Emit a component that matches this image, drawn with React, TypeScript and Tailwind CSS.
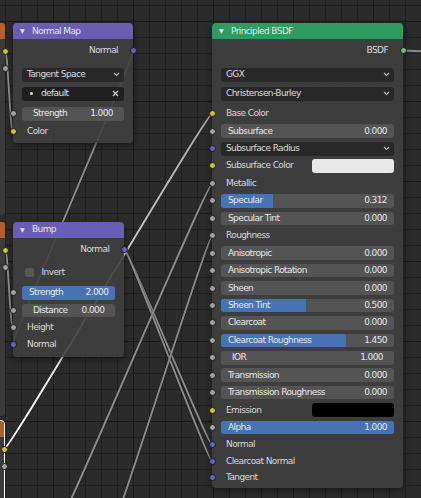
import React from 'react';

// socket colours
const YEL = 'bg-[#c7c729]';
const GRY = 'bg-[#a1a1a1]';
const BLU = 'bg-[#6363c7]';
const GRN = 'bg-[#63c763]';

// row heights: the small nodes run a touch tighter than the BSDF node
const RS = 'h-[17.35px]';
const RP = 'h-[17.45px]';
const RV = 'h-[16.6px]';

function Socket({ c, right }: { c: string; right?: boolean }) {
  return (
    <span
      className={`absolute top-1/2 -mt-[3.5px] h-[7px] w-[7px] rounded-full border border-[#1b1b1b] ${c} ${
        right ? 'right-[-3.5px]' : 'left-[-3.5px]'
      }`}
    />
  );
}

function Chevron() {
  return (
    <svg width="7" height="5" viewBox="0 0 7 5" className="shrink-0">
      <polyline points="1,1 3.5,3.5 6,1" fill="none" stroke="#b8b8b8" strokeWidth="1.1" />
    </svg>
  );
}

function Node({
  pos,
  title,
  head,
  children,
}: {
  pos: string;
  title: string;
  head: string;
  children: React.ReactNode;
}) {
  return (
    <div className={`absolute flex flex-col rounded-[4px] shadow-[0_2px_6px_rgba(0,0,0,0.45)] ${pos}`}>
      <div className={`flex h-[16px] shrink-0 items-center rounded-t-[4px] pl-[7px] text-[#e6e6e6] ${head}`}>
        <span className="w-[12px] text-[6px] leading-none">▼</span>
        <span className="leading-none">{title}</span>
      </div>
      <div className="flex flex-col rounded-b-[4px] bg-[#3f3f3f]/90">{children}</div>
    </div>
  );
}

function Output({ text, s }: { text: string; s: string }) {
  return (
    <div className={`relative flex ${RS} shrink-0 items-center justify-end pr-[15px]`}>
      <span className="leading-none text-[#dcdcdc]">{text}</span>
      <Socket c={s} right />
    </div>
  );
}

function Label({ text, s, h = RS }: { text: string; s: string; h?: string }) {
  return (
    <div className={`relative flex ${h} shrink-0 items-center pl-[14px]`}>
      <Socket c={s} />
      <span className="leading-none text-[#d9d9d9]">{text}</span>
    </div>
  );
}

function Slider({
  label,
  value,
  fill = 0,
  s,
  indent,
  h = RS,
}: {
  label: string;
  value: string;
  fill?: number;
  s?: string;
  indent?: boolean;
  h?: string;
}) {
  return (
    <div className={`relative flex ${h} shrink-0 items-center px-[9px]`}>
      {s && <Socket c={s} />}
      <div className="relative h-[13.5px] w-full overflow-hidden rounded-[3px] bg-[#545454]">
        {fill > 0 && (
          <div className="absolute inset-y-0 left-0 bg-[#4772b3]" style={{ width: `${fill}%` }} />
        )}
        <div
          className={`relative flex h-full items-center justify-between leading-none text-[#e8e8e8] ${
            indent ? 'px-[11px]' : 'px-[7px]'
          }`}
        >
          <span>{label}</span>
          <span>{value}</span>
        </div>
      </div>
    </div>
  );
}

function Drop({ label, s, h = 'h-[19px]' }: { label: string; s?: string; h?: string }) {
  return (
    <div className={`relative flex shrink-0 items-center px-[9px] ${h}`}>
      {s && <Socket c={s} />}
      <div className="flex h-[14px] w-full items-center justify-between rounded-[3px] bg-[#282828] pl-[5px] pr-[4px] leading-none text-[#dcdcdc]">
        <span>{label}</span>
        <Chevron />
      </div>
    </div>
  );
}

function Swatch({ label, s, color }: { label: string; s: string; color: string }) {
  return (
    <div className={`relative flex ${RP} shrink-0 items-center pl-[14px] pr-[9px]`}>
      <Socket c={s} />
      <span className="flex-1 leading-none text-[#d9d9d9]">{label}</span>
      <div className={`h-[13.5px] w-[82px] rounded-[3px] ${color}`} />
    </div>
  );
}

// clipped image texture nodes along the left edge
function SideNode({ pos, selected }: { pos: string; selected?: boolean }) {
  return (
    <div
      className={`absolute left-[-100px] w-[105px] rounded-[4px] bg-[#3d3d3d]/90 ${pos} ${
        selected ? 'border border-white' : ''
      }`}
    >
      <div className="h-[16px] rounded-t-[3px] bg-[#b4602c]" />
      <span className="absolute right-[-3.5px] top-[24.5px] h-[7px] w-[7px] rounded-full border border-[#1b1b1b] bg-[#c7c729]" />
      <span className="absolute right-[-3.5px] top-[41.5px] h-[7px] w-[7px] rounded-full border border-[#1b1b1b] bg-[#a1a1a1]" />
    </div>
  );
}

const wire = (x1: number, y1: number, x2: number, y2: number, h = 8) =>
  `M${x1} ${y1} C${x1 + h} ${y1} ${x2 - h} ${y2} ${x2} ${y2}`;

const WIRES = [
  wire(5, 51, 13, 131.4, 3),
  wire(5, 249, 13, 327.7, 3),
  wire(133, 50.6, 13, 345, 5),
  wire(124.3, 249.3, 212, 444.8, 4),
  wire(124.3, 249.3, 212, 461.4, 4),
  wire(55, 531, 212, 184, 6),
  wire(111, 530, 212, 236.6, 5),
  wire(403, 50.5, 440, 52, 10),
];

function Canvas() {
  return (
    <svg className="absolute inset-0" width="421" height="498" viewBox="0 0 421 498">
      <defs>
        <pattern id="minor" x="5" y="5" width="16" height="16" patternUnits="userSpaceOnUse">
          <path d="M0.5 0 V16 M0 0.5 H16" stroke="#1f1f1f" strokeWidth="1" />
        </pattern>
        <pattern id="major" x="53" y="21" width="80" height="80" patternUnits="userSpaceOnUse">
          <path d="M0.5 0 V80 M0 0.5 H80" stroke="#191919" strokeWidth="1" />
        </pattern>
        <linearGradient id="sel" gradientUnits="userSpaceOnUse" x1="5" y1="448" x2="212" y2="113.7">
          <stop offset="0" stopColor="#ffffff" />
          <stop offset="1" stopColor="#a4a4a4" />
        </linearGradient>
      </defs>
      <rect width="421" height="498" fill="#2b2b2b" />
      <rect width="421" height="498" fill="url(#minor)" />
      <rect width="421" height="498" fill="url(#major)" />
      {WIRES.map((d, i) => (
        <g key={i}>
          <path d={d} fill="none" stroke="rgba(0,0,0,0.3)" strokeWidth="3.2" />
          <path d={d} fill="none" stroke="#8c8c8c" strokeWidth="1.9" />
        </g>
      ))}
      <path d={wire(5, 448, 212, 113.7, 6)} fill="none" stroke="rgba(0,0,0,0.3)" strokeWidth="3.2" />
      <path d={wire(5, 448, 212, 113.7, 6)} fill="none" stroke="url(#sel)" strokeWidth="1.9" />
    </svg>
  );
}

export default function App() {
  return (
    <div className="relative h-[498px] w-[421px] overflow-hidden bg-[#2b2b2b] font-['DejaVu_Sans',sans-serif] text-[9px] tracking-[-0.6px]">
      <Canvas />

      <SideNode pos="top-[23px] h-[192px]" />
      <SideNode pos="top-[222px] h-[194px]" />
      <SideNode pos="top-[420px] h-[120px]" selected />

      {/* Normal Map */}
      <Node pos="left-[13px] top-[23px] w-[120px]" title="Normal Map" head="bg-[#6a5db4]">
        <div className="h-[2.9px]" />
        <Output text="Normal" s={BLU} />
        <div className="h-[6.25px]" />
        <Drop label="Tangent Space" />
        <div className="relative flex h-[19px] items-center px-[9px]">
          <div className="flex h-[14px] w-full items-center rounded-[3px] bg-[#1f1f1f] pr-[5px] leading-none text-[#e0e0e0]">
            <span className="ml-[7.5px] h-[3px] w-[3px] rounded-full bg-[#dddddd]" />
            <span className="ml-[8.5px] flex-1">default</span>
            <svg width="7" height="7" viewBox="0 0 7 7">
              <path d="M1 1 L6 6 M6 1 L1 6" stroke="#cfcfcf" strokeWidth="1.3" />
            </svg>
          </div>
        </div>
        <div className="h-[1.8px]" />
        <Slider label="Strength" value="1.000" s={GRY} indent />
        <Label text="Color" s={YEL} />
        <div className="h-[3.3px]" />
      </Node>

      {/* Bump */}
      <Node pos="left-[13px] top-[221.7px] w-[111.3px]" title="Bump" head="bg-[#6a5db4]">
        <div className="h-[2.9px]" />
        <Output text="Normal" s={BLU} />
        <div className="h-[4.75px]" />
        <div className="flex h-[20px] items-center pl-[12px]">
          <span className="h-[9px] w-[9px] rounded-[2px] bg-[#585858]" />
          <span className="ml-[7.5px] leading-none text-[#d9d9d9]">Invert</span>
        </div>
        <div className="h-[1.6px]" />
        <Slider label="Strength" value="2.000" fill={100} s={GRY} />
        <Slider label="Distance" value="0.000" s={GRY} indent />
        <Label text="Height" s={GRY} />
        <Label text="Normal" s={BLU} />
        <div className="h-[3px]" />
      </Node>

      {/* Principled BSDF */}
      <Node pos="left-[212px] top-[23px] w-[191px]" title="Principled BSDF" head="bg-[#2e9b62]">
        <div className="h-[2.8px]" />
        <Output text="BSDF" s={GRN} />
        <div className="h-[6.35px]" />
        <Drop label="GGX" />
        <Drop label="Christensen-Burley" />
        <div className="h-[1.45px]" />
        <Label text="Base Color" s={YEL} h={RP} />
        <Slider label="Subsurface" value="0.000" s={GRY} h={RP} />
        <Drop label="Subsurface Radius" s={BLU} h={RP} />
        <Swatch label="Subsurface Color" s={YEL} color="bg-[#e8e8e8]" />
        <Label text="Metallic" s={GRY} h={RP} />
        <Slider label="Specular" value="0.312" fill={30} s={GRY} h={RP} />
        <Slider label="Specular Tint" value="0.000" s={GRY} h={RP} />
        <Label text="Roughness" s={GRY} h={RP} />
        <Slider label="Anisotropic" value="0.000" s={GRY} h={RP} />
        <Slider label="Anisotropic Rotation" value="0.000" s={GRY} h={RP} />
        <Slider label="Sheen" value="0.000" s={GRY} h={RP} />
        <Slider label="Sheen Tint" value="0.500" fill={49} s={GRY} h={RP} />
        <Slider label="Clearcoat" value="0.000" s={GRY} h={RP} />
        <Slider label="Clearcoat Roughness" value="1.450" fill={72} s={GRY} h={RP} />
        <Slider label="IOR" value="1.000" s={GRY} indent h={RP} />
        <Slider label="Transmission" value="0.000" s={GRY} h={RP} />
        <Slider label="Transmission Roughness" value="0.000" s={GRY} h={RP} />
        <Swatch label="Emission" s={YEL} color="bg-black" />
        <Slider label="Alpha" value="1.000" fill={100} s={GRY} h={RP} />
        <Label text="Normal" s={BLU} h={RV} />
        <Label text="Clearcoat Normal" s={BLU} h={RV} />
        <Label text="Tangent" s={BLU} h={RV} />
        <div className="h-[2px]" />
      </Node>
    </div>
  );
}
